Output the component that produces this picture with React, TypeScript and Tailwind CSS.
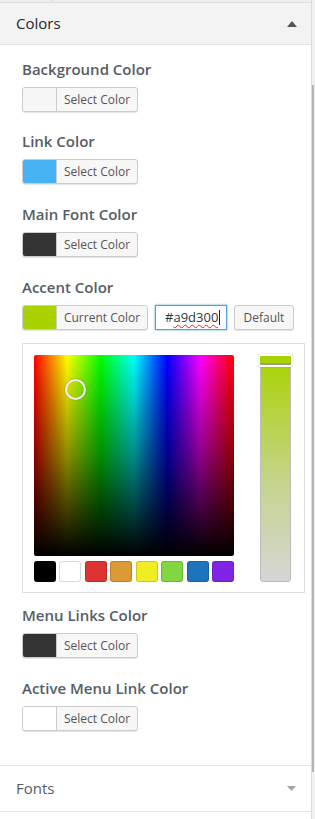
import React from "react";

const font = { fontFamily: '"Open Sans", "Noto Sans", sans-serif' };

function SelectButton({ color, label = "Select Color", width = "w-[116px]" }: { color: string; label?: string; width?: string }) {
  return (
    <div className={`flex h-[25px] ${width} overflow-hidden rounded-[3px] border border-[#cccccc] bg-[#f7f7f7] shadow-[0_1px_0_#e5e5e5]`}>
      <div className="h-full w-[34px] border-r border-[#cccccc]" style={{ backgroundColor: color }} />
      <div className="flex flex-1 items-center justify-center text-[12px] text-[#555555]">{label}</div>
    </div>
  );
}

function Label({ children }: { children: React.ReactNode }) {
  return <div className="h-[20px] text-[15px] font-semibold leading-[20px] text-[#555d66]">{children}</div>;
}

const swatches = ["#000000", "#ffffff", "#dd3333", "#dd9933", "#eeee22", "#81d742", "#1e73be", "#8224e3"];

export default function App() {
  return (
    <div className="flex h-[819px] w-[315px] overflow-hidden bg-[#f1f1f1]" style={font}>
      <div className="flex w-[312px] flex-col border-r border-[#dddddd] bg-white">
        <div className="flex h-[3px] border-b border-[#dddddd] bg-[#eeeeee]">
          <div className="w-[52px] border-r border-[#d5d5d5]" />
        </div>
        <div className="flex h-[42px] items-center justify-between border-b border-[#e2e2e2] bg-[#f3f3f3] pl-4 pr-[14px]">
          <span className="text-[15px] text-[#23282d]">Colors</span>
          <svg width="10" height="6" viewBox="0 0 10 6"><path d="M0 6 L5 0 L10 6 Z" fill="#555555" /></svg>
        </div>
        <div className="flex flex-col pl-[22px] pt-[14px]">
          <Label>Background Color</Label>
          <div className="mt-[8px]"><SelectButton color="#f7f7f7" /></div>
          <div className="mt-[19px]"><Label>Link Color</Label></div>
          <div className="mt-[8px]"><SelectButton color="#47b3f3" /></div>
          <div className="mt-[20px]"><Label>Main Font Color</Label></div>
          <div className="mt-[8px]"><SelectButton color="#333333" /></div>
          <div className="mt-[20px]"><Label>Accent Color</Label></div>
          <div className="mt-[8px] flex items-center">
            <SelectButton color="#a9d300" label="Current Color" width="w-[126px]" />
            <div className="ml-[7px] flex h-[25px] w-[72px] items-center border border-[#5b9dd9] bg-white pl-[9px] text-[13px] text-[#32373c] shadow-[0_0_2px_rgba(30,140,190,0.8)]">
              <span>#</span>
              <span className="underline decoration-[#e22] decoration-wavy decoration-1 underline-offset-2">a9d300</span>
              <span className="ml-[1px] inline-block h-[15px] w-px bg-[#222]" />
            </div>
            <div className="ml-[7px] flex h-[25px] w-[60px] items-center justify-center rounded-[3px] border border-[#cccccc] bg-[#f7f7f7] text-[12px] text-[#555555] shadow-[0_1px_0_#e5e5e5]">Default</div>
          </div>
          <div className="mt-[13px] flex h-[250px] w-[283px] border border-[#dfdfdf] pl-[11px] pt-[11px]">
            <div className="flex w-[200px] flex-col">
              <div
                className="relative h-[201px] w-[200px] rounded-[2px]"
                style={{
                  background:
                    "linear-gradient(to bottom, rgba(0,0,0,0) 0%, rgba(0,0,0,0.45) 50%, #000 100%), linear-gradient(to right, #ff0000 0%, #ffff00 16.6%, #00ff00 33.3%, #00ffff 50%, #0000ff 66.6%, #ff00ff 83.3%, #ff0000 100%)",
                }}
              >
                <div className="absolute left-[31px] top-[24px] h-[21px] w-[21px] rounded-full border-[2px] border-[#eeeeee] shadow-[0_0_1px_rgba(0,0,0,0.6)]" />
              </div>
              <div className="mt-[5px] flex justify-between">
                {swatches.map((c) => (
                  <div
                    key={c}
                    className="h-[21px] w-[22px] rounded-[3px] shadow-[inset_0_0_0_1px_rgba(0,0,0,0.15)]"
                    style={{ backgroundColor: c }}
                  />
                ))}
              </div>
            </div>
            <div className="relative ml-[26px] h-[227px] w-[31px]">
              <div
                className="h-full w-full rounded-b-[3px] border border-[#bcbcbc]"
                style={{ background: "linear-gradient(to bottom, #a9d300 0%, #c4d48a 55%, #d6d6d6 100%)" }}
              />
              <div className="absolute left-[-2px] top-[-1px] h-[13px] w-[35px] rounded-[3px] border-2 border-white bg-[#a9d300] shadow-[0_0_1px_rgba(0,0,0,0.5)]">
                <div className="mt-[7px] h-[2px] w-full bg-[#9aa270]" />
              </div>
            </div>
          </div>
          <div className="mt-[12px]"><Label>Menu Links Color</Label></div>
          <div className="mt-[8px]"><SelectButton color="#333333" /></div>
          <div className="mt-[20px]"><Label>Active Menu Link Color</Label></div>
          <div className="mt-[8px]"><SelectButton color="#ffffff" /></div>
        </div>
        <div className="mt-[34px] flex h-[47px] items-center justify-between border-y border-[#e5e5e5] pl-4 pr-[15px]">
          <span className="text-[15px] text-[#555d66]">Fonts</span>
          <svg width="9" height="5" viewBox="0 0 9 5"><path d="M0 0 L9 0 L4.5 5 Z" fill="#a0a5aa" /></svg>
        </div>
        <div className="flex-1 bg-white" />
      </div>
      <div className="flex w-[3px] flex-col">
        <div className="h-[85px]" />
        <div className="h-[687px] w-[2px] bg-[#b5b5b5]" />
      </div>
    </div>
  );
}
